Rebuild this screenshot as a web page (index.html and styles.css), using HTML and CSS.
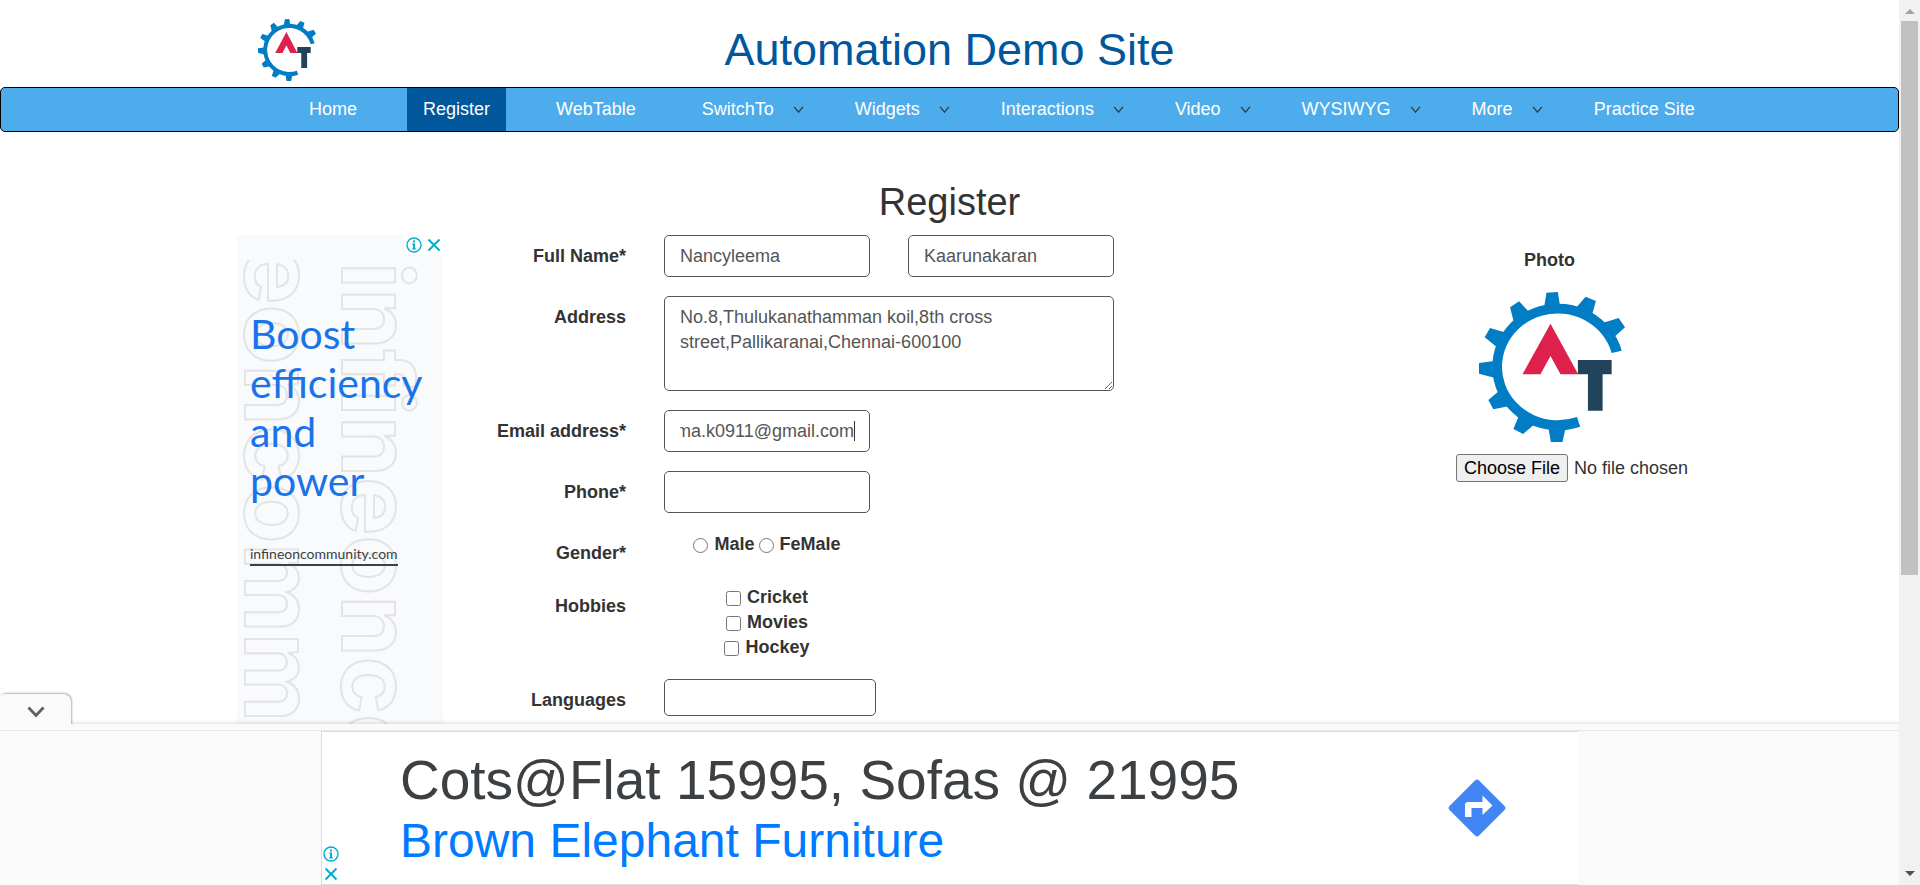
FILE: index.html
```html
<!DOCTYPE html>
<html lang="en">
<head>
<meta charset="utf-8">
<title>Register</title>
<link rel="stylesheet" href="styles.css">
</head>
<body>
<svg class="defs" aria-hidden="true">
  <symbol id="logo" viewBox="118 186 437 450" preserveAspectRatio="none">
    <g fill="#007dc5">
      <path d="M545 362A197 190 0 1 0 421 590L411 561A167 160 0 1 1 515 369Z"/>
      <path d="M320 188L354 186L361 230H313Z"/>
      <path d="M437 200L468 213L456 256L408 234Z"/>
      <path d="M536 264L555 292L526 318L504 330L478 282Z"/>
      <path d="M211 232L238 214L268 246L222 276Z"/>
      <path d="M135 322L151 294L194 307L170 350Z"/>
      <path d="M118 399L164 393V443L118 431Z"/>
      <path d="M146 510L161 538L206 529L174 486Z"/>
      <path d="M221 597L250 612L284 583L237 558Z"/>
      <path d="M333 636H368L377 594H326Z"/>
    </g>
    <path fill="#dd214c" d="M332 281L415 433H362L332 378L302 433H248Z"/>
    <path fill="#21435c" d="M414 390H515V433H488V542H444V433H414Z"/>
  </symbol>
  <symbol id="caret" viewBox="0 0 12 8"><path d="M1 1L6 7L11 1" fill="none" stroke="#333" stroke-width="1.4"/></symbol>
  <symbol id="info" viewBox="0 0 16 16">
    <circle cx="8" cy="8" r="7" fill="none" stroke="#00aecd" stroke-width="1.4"/>
    <path d="M7 3.500h2v2H7zM6 6.500h3v5h1v1H6v-1h1v-4H6z" fill="#00aecd"/>
  </symbol>
  <symbol id="close" viewBox="0 0 16 16"><path d="M2.500 2.500L13.500 13.500M13.500 2.500L2.500 13.500" fill="none" stroke="#00aecd" stroke-width="2"/></symbol>
</svg>

<div class="page">
  <header class="masthead">
    <svg class="masthead-logo" role="img" aria-label="Logo"><use href="#logo"/></svg>
    <h1>Automation Demo Site</h1>
  </header>

  <nav class="navbar">
    <ul>
      <li><a href="#">Home</a></li>
      <li class="active"><a href="#">Register</a></li>
      <li><a href="#">WebTable</a></li>
      <li><a href="#">SwitchTo</a><svg class="caret"><use href="#caret"/></svg></li>
      <li><a href="#">Widgets</a><svg class="caret"><use href="#caret"/></svg></li>
      <li><a href="#">Interactions</a><svg class="caret"><use href="#caret"/></svg></li>
      <li><a href="#">Video</a><svg class="caret"><use href="#caret"/></svg></li>
      <li><a href="#">WYSIWYG</a><svg class="caret"><use href="#caret"/></svg></li>
      <li><a href="#">More</a><svg class="caret"><use href="#caret"/></svg></li>
      <li><a href="#">Practice Site</a></li>
    </ul>
  </nav>

  <main>
    <h2>Register</h2>
    <div class="container">
      <aside class="side-ad">
        <svg class="side-pattern" viewBox="0 0 206 600" aria-hidden="true">
          <text transform="translate(105 27) rotate(90)">infineonco</text>
          <text transform="translate(8 11) rotate(90)">eoncomm</text>
        </svg>
        <div class="side-controls">
          <button type="button" aria-label="Ad information"><svg><use href="#info"/></svg></button>
          <button type="button" aria-label="Close ad"><svg><use href="#close"/></svg></button>
        </div>
        <p class="side-title">Boost efficiency and power</p>
        <a class="side-link" href="#">infineoncommunity.com</a>
      </aside>

      <form class="register-form">
        <div class="row">
          <label class="row-label" for="first">Full Name*</label>
          <div class="fields names">
            <input class="control" id="first" type="text" value="Nancyleema">
            <input class="control" type="text" aria-label="Last name" value="Kaarunakaran">
          </div>
        </div>
        <div class="row">
          <label class="row-label" for="address">Address</label>
          <div class="fields">
            <textarea class="control" id="address">No.8,Thulukanathamman koil,8th cross street,Pallikaranai,Chennai-600100</textarea>
          </div>
        </div>
        <div class="row">
          <label class="row-label" for="email">Email address*</label>
          <div class="fields focused"><input class="control short" id="email" type="text" value="Nancyleema.k0911@gmail.com"></div>
        </div>
        <div class="row">
          <label class="row-label" for="phone">Phone*</label>
          <div class="fields"><input class="control short" id="phone" type="tel"></div>
        </div>
        <div class="row">
          <span class="row-label" id="gender">Gender*</span>
          <div class="options inline" role="radiogroup" aria-labelledby="gender">
            <label><input type="radio" name="gender">Male</label>
            <label><input type="radio" name="gender">FeMale</label>
          </div>
        </div>
        <div class="row">
          <span class="row-label" id="hobbies">Hobbies</span>
          <div class="options" role="group" aria-labelledby="hobbies">
            <label><input type="checkbox">Cricket</label>
            <label><input type="checkbox">Movies</label>
            <label><input type="checkbox">Hockey</label>
          </div>
        </div>
        <div class="row">
          <label class="row-label" for="languages">Languages</label>
          <div class="fields"><input class="control languages" id="languages" type="text"></div>
        </div>
      </form>

      <div class="photo">
        <label for="photo">Photo</label>
        <svg class="photo-logo" role="img" aria-label="Logo"><use href="#logo"/></svg>
        <input id="photo" type="file">
      </div>
    </div>
  </main>

  <section class="anchor">
    <button class="anchor-tab" type="button" aria-label="Collapse ad">
      <svg viewBox="0 0 18 12"><path d="M1.500 1.500L9 9.500L16.500 1.500" fill="none" stroke="#5f6063" stroke-width="2.800"/></svg>
    </button>
    <div class="banner">
      <div class="banner-controls">
        <button type="button" aria-label="Ad information"><svg><use href="#info"/></svg></button>
        <button type="button" aria-label="Close ad"><svg><use href="#close"/></svg></button>
      </div>
      <div class="banner-copy">
        <p>Cots@Flat 15995, Sofas @ 21995</p>
        <a href="#">Brown Elephant Furniture</a>
      </div>
      <svg class="directions" viewBox="0 0 58 58" role="img" aria-label="Directions">
        <path d="M27 1.500a3 3 0 0 1 4 0L56.500 27a3 3 0 0 1 0 4L31 56.500a3 3 0 0 1-4 0L1.500 31a3 3 0 0 1 0-4Z" fill="#4285f4"/>
        <path d="M17 38V26a3 3 0 0 1 3-3H34.500V16.500L44.500 26.500L34.500 36V29H23.500V38Z" fill="#fff"/>
      </svg>
    </div>
  </section>
</div>

<div class="scrollbar" aria-hidden="true">
  <span class="arrow up"></span>
  <span class="thumb"></span>
  <span class="arrow down"></span>
</div>
<script src="main.js"></script>
</body>
</html>
```
FILE: styles.css
```css
* { box-sizing: border-box; }

body {
  display: flex;
  height: 100vh;
  margin: 0;
  overflow: hidden;
  background: #fff;
  color: #333;
  font: 18px/25px "Liberation Sans", Arial, sans-serif;
}

h1, h2, p, ul { margin: 0; padding: 0; }
input, textarea, button { font: inherit; }
a { text-decoration: none; }

.defs { position: absolute; width: 0; height: 0; }

.page {
  position: relative;
  flex: 1;
  min-width: 0;
  overflow: hidden;
}

/* Header */
.masthead {
  display: grid;
  grid-template-columns: 1fr auto 1fr;
  align-items: center;
  height: 87px;
  padding-top: 13px;
}
.masthead-logo { width: 58px; height: 62px; margin-left: 258px; }
.masthead h1 {
  color: #00579c;
  font-size: 45px;
  font-weight: 400;
  line-height: 50px;
}

.navbar {
  height: 45px;
  padding-left: 292px;
  border: 1px solid #000;
  border-radius: 5px;
  background: #4dadec;
}
.navbar ul {
  display: flex;
  gap: 34px;
  height: 100%;
  list-style: none;
}
.navbar li { display: flex; align-items: center; white-space: nowrap; }
.navbar a { padding: 9px 16px; color: #fff; }
.navbar .active { background: #00579c; }
.caret { width: 11px; height: 7px; margin: 0 1px 0 3px; }

/* Content */
h2 {
  padding-top: 49px;
  margin-bottom: 12px;
  font-size: 38px;
  font-weight: 400;
  line-height: 42px;
  text-align: center;
}
.container {
  display: grid;
  grid-template-columns: 206px 1fr 225px;
  width: 100%;
  max-width: 1463px;
  margin: 0 auto;
  padding: 0 19px;
}

.side-ad {
  position: relative;
  height: 600px;
  padding: 74px 0 0 13px;
  background: #f8fafc;
}
.side-pattern {
  position: absolute;
  inset: 0;
  clip-path: inset(25px 0 0 0);
  fill: none;
  stroke: #e3e4e6;
  stroke-width: 2px;
  font: 700 98px Inter, sans-serif;
  font-optical-sizing: none;
}
.side-controls {
  position: absolute;
  top: 1px;
  right: 0;
  display: flex;
  gap: 1px;
}
.side-controls button,
.banner-controls button {
  padding: 0;
  border: 0;
  background: #fff;
}
.side-controls button { width: 19px; height: 19px; }
.side-controls svg { width: 16px; height: 16px; vertical-align: top; margin-top: 1px; }
.side-title {
  position: relative;
  width: 182px;
  color: #1a73e8;
  font: 41px/49px Lato, sans-serif;
}
.side-link {
  position: relative;
  display: inline-block;
  margin-top: 39px;
  border-bottom: 2px solid #3c4043;
  color: #3c4043;
  font: 14px/20px Lato, sans-serif;
}

.register-form {
  display: flex;
  flex-direction: column;
  gap: 19px;
}
.row { display: flex; gap: 38px; }
.row-label {
  width: 183px;
  min-height: 34px;
  padding-top: 9px;
  font-weight: 700;
  text-align: right;
}
.fields { width: 450px; display: flex; }
.names { justify-content: space-between; }
.control {
  height: 42px;
  padding: 8px 15px 7px;
  border: 1px solid #555;
  border-radius: 5px;
  background: #fff;
  color: #555;
  outline: 0;
}
.names .control, .short { width: 206px; }
textarea.control { width: 100%; height: 95px; resize: vertical; }
.languages { width: 212px; height: 37px; }

/* Steady text cursor at the end of the field being edited */
.focused { position: relative; width: 206px; }
.focused .control { caret-color: transparent; }
.focused::after {
  content: "";
  position: absolute;
  top: 11px;
  right: 15px;
  width: 1px;
  height: 20px;
  background: #333;
}

.options {
  display: flex;
  flex-direction: column;
  align-items: center;
  width: 206px;
  font-weight: 700;
}
.options.inline {
  flex-direction: row;
  align-items: flex-start;
  justify-content: center;
  gap: 4px;
}
.options label { display: flex; align-items: center; gap: 6px; }
.options input { width: 15px; height: 15px; margin: 1px 0 0; }

.photo {
  display: flex;
  flex-direction: column;
  width: 187px;
  margin-left: 19px;
  padding-top: 13px;
}
.photo label { font-weight: 700; text-align: center; }
.photo-logo { width: 146px; height: 150px; margin: 19px 0 12px 23px; }
.photo input { width: 240px; }
.photo input::file-selector-button {
  height: 28px;
  margin-right: 6px;
  padding: 0 7px;
  border: 1px solid #767676;
  border-radius: 3px;
  background: #efefef;
  color: #000;
  font: inherit;
}

/* Bottom anchored banner */
.anchor {
  position: absolute;
  right: 0;
  bottom: 0;
  left: 0;
  height: 161px;
  padding-top: 6px;
  background: #fafafa;
  box-shadow: 0 0 5px rgba(0, 0, 0, .2);
}
.anchor-tab {
  position: absolute;
  top: -30px;
  left: 0;
  width: 71px;
  height: 31px;
  padding: 5px 0 0;
  border: 0;
  border-radius: 5px 8px 0 0;
  background: #fafafa;
  box-shadow: 1px -1px 2px rgba(0, 0, 0, .3);
  clip-path: inset(-4px -4px 0 0);
}
.anchor-tab svg { width: 18px; height: 12px; }
.anchor::before {
  content: "";
  display: block;
  height: 1px;
  background: #e8e8e8;
}
.banner {
  display: flex;
  align-items: center;
  width: 1257px;
  max-width: 100%;
  height: 154px;
  margin: 0 auto;
  border: 1px solid #dcdcdc;
  border-right: 0;
  background: #fff;
}
.banner-controls {
  display: flex;
  flex-direction: column;
  align-self: flex-end;
  gap: 4px;
  padding: 0 0 2px 1px;
}
.banner-controls button, .banner-controls svg { display: block; width: 16px; height: 16px; }
.banner-copy { flex: 1; margin-left: 61px; padding-top: 2px; }
.banner-copy p { color: #3c4043; font-size: 55px; line-height: 62px; }
.banner-copy a { color: #007bff; font-size: 48px; line-height: 59px; }
.directions { width: 58px; height: 58px; margin-right: 72px; }

/* Scroll strip */
.scrollbar {
  display: flex;
  flex-direction: column;
  align-items: center;
  width: 21px;
  background: #f1f1f1;
}
.thumb { width: 17px; height: 62.6%; margin: 7px 0 auto; background: #c1c1c1; }
.arrow { border: 5px solid transparent; }
.up { margin-top: 4px; border-bottom-color: #a3a3a3; }
.down { margin-bottom: 4px; border-top-color: #505050; }
```
FILE: main.js
```js
const email = document.getElementById("email");
email.focus();
email.setSelectionRange(email.value.length, email.value.length);
email.scrollLeft = email.scrollWidth;
```
